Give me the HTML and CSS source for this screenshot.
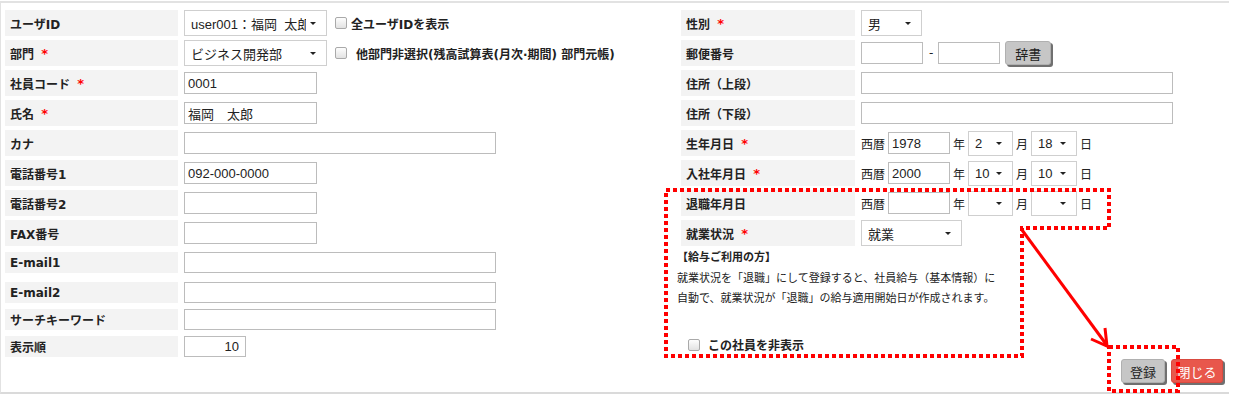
FILE: index.html
```html
<!DOCTYPE html>
<html lang="ja">
  <head>
    <meta charset="UTF-8" />
    <title>社員登録</title>
    <link rel="stylesheet" href="styles.css">
  </head>
  <body>
    <div class="panel">
      <div class="cols">
        <!-- left column -->
        <div class="col-l">
          <div class="rows">
            <div class="row">
              <div class="lbl">ユーザID</div>
              <div class="sel w143"><span>user001：福岡&nbsp;&nbsp;太郎</span><i class="caret"></i></div>
              <label class="check"><span class="chk"></span>全ユーザIDを表示</label>
            </div>
            <div class="row">
              <div class="lbl">部門 <b class="req">*</b></div>
              <div class="sel w143"><span>ビジネス開発部</span><i class="caret"></i></div>
              <label class="check"><span class="chk"></span><span class="pad">他部門非選択(残高試算表(月次·期間) 部門元帳)</span></label>
            </div>
            <div class="row">
              <div class="lbl">社員コード <b class="req">*</b></div>
              <input class="txt w133" type="text" value="0001">
            </div>
            <div class="row">
              <div class="lbl">氏名 <b class="req">*</b></div>
              <input class="txt w133" type="text" value="福岡　太郎">
            </div>
            <div class="row">
              <div class="lbl">カナ</div>
              <input class="txt w312" type="text" value="">
            </div>
            <div class="row">
              <div class="lbl">電話番号1</div>
              <input class="txt w133" type="text" value="092-000-0000">
            </div>
            <div class="row">
              <div class="lbl">電話番号2</div>
              <input class="txt w133" type="text" value="">
            </div>
            <div class="row">
              <div class="lbl">FAX番号</div>
              <input class="txt w133" type="text" value="">
            </div>
          </div>

          <div class="rows compact">
            <div class="row">
              <div class="lbl">E-mail1</div>
              <input class="txt w312" type="text" value="">
            </div>
            <div class="row more">
              <div class="lbl">E-mail2</div>
              <input class="txt w312" type="text" value="">
            </div>
            <div class="row">
              <div class="lbl">サーチキーワード</div>
              <input class="txt w312" type="text" value="">
            </div>
            <div class="row">
              <div class="lbl">表示順</div>
              <input class="txt w62 num" type="text" value="10">
            </div>
          </div>
        </div>

        <!-- right column -->
        <div class="col-r">
          <div class="rows">
            <div class="row">
              <div class="lbl">性別 <b class="req">*</b></div>
              <div class="sel w61"><span>男</span><i class="caret"></i></div>
            </div>
            <div class="row">
              <div class="lbl">郵便番号</div>
              <div class="zip">
                <input class="txt w62" type="text" value="">
                <span class="dash">-</span>
                <input class="txt w62" type="text" value="">
                <button class="btn dict">辞書</button>
              </div>
            </div>
            <div class="row">
              <div class="lbl">住所（上段）</div>
              <input class="txt w312" type="text" value="">
            </div>
            <div class="row">
              <div class="lbl">住所（下段）</div>
              <input class="txt w312" type="text" value="">
            </div>
            <div class="row">
              <div class="lbl">生年月日 <b class="req">*</b></div>
              <div class="date">
                <span class="unit">西暦</span>
                <input class="txt w62" type="text" value="1978">
                <span class="unit">年</span>
                <div class="sel w45"><span>2</span><i class="caret"></i></div>
                <span class="unit">月</span>
                <div class="sel w46"><span>18</span><i class="caret"></i></div>
                <span class="unit">日</span>
              </div>
            </div>
            <div class="row">
              <div class="lbl">入社年月日 <b class="req">*</b></div>
              <div class="date">
                <span class="unit">西暦</span>
                <input class="txt w62" type="text" value="2000">
                <span class="unit">年</span>
                <div class="sel w45"><span>10</span><i class="caret"></i></div>
                <span class="unit">月</span>
                <div class="sel w46"><span>10</span><i class="caret"></i></div>
                <span class="unit">日</span>
              </div>
            </div>
            <div class="row">
              <div class="lbl">退職年月日</div>
              <div class="date">
                <span class="unit">西暦</span>
                <input class="txt w62" type="text" value="">
                <span class="unit">年</span>
                <div class="sel w45"><span></span><i class="caret"></i></div>
                <span class="unit">月</span>
                <div class="sel w46"><span></span><i class="caret"></i></div>
                <span class="unit">日</span>
              </div>
            </div>
            <div class="row">
              <div class="lbl">就業状況 <b class="req">*</b></div>
              <div class="sel w101"><span>就業</span><i class="caret"></i></div>
            </div>
          </div>

          <div class="note">
            <b>【給与ご利用の方】</b><br>
            就業状況を「退職」にして登録すると、社員給与（基本情報）に<br>
            自動で、就業状況が「退職」の給与適用開始日が作成されます。
          </div>

          <label class="check hide-row"><span class="chk"></span>この社員を非表示</label>
        </div>
      </div>

      <div class="footer">
        <button class="btn save">登録</button>
        <button class="btn red">閉じる</button>
      </div>
    </div>

    <!-- annotation overlay -->
    <svg class="marks" width="1247" height="399" viewBox="0 0 1247 399">
      <g fill="none" stroke="#f00">
        <path d="M666 190H1109V228H1022V356H666Z" stroke-width="4" stroke-dasharray="4 3" />
        <rect x="1109" y="347" width="69" height="44" stroke-width="4" stroke-dasharray="4 3" />
        <path d="M1022 230L1106 344" stroke-width="3" />
        <path d="M1091 339L1107 346L1105 328" stroke-width="3" />
      </g>
    </svg>
  </body>
</html>
```

FILE: styles.css
```css
* {
  box-sizing: border-box;
}

body {
  margin: 0;
  font-family: "DejaVu Sans", "Noto Sans CJK JP", sans-serif;
  font-size: 12px;
  color: #222;
  background: #fff;
}

.panel {
  width: 1229px;
  height: 393px;
  margin-top: 1px;
  border-top: 2px solid #e2e2e2;
  border-left: 1px solid #e2e2e2;
  border-bottom: 2px solid #dadada;
  padding: 7px 4px 0 4px;
}

.cols {
  display: flex;
}

.col-l {
  width: 671px;
}

.col-r {
  flex: 1;
}

.rows {
  display: flex;
  flex-direction: column;
  gap: 4px;
}

.row {
  display: flex;
  align-items: center;
  gap: 6px;
  height: 26px;
}

.compact {
  gap: 6px;
  margin-top: 6px;
}

.compact .row {
  height: 21px;
  align-items: stretch;
}

.compact .row.more {
  margin-top: 3px;
}

.lbl {
  width: 173px;
  align-self: stretch;
  display: flex;
  align-items: center;
  padding-left: 5px;
  background: #f3f3f3;
  font-weight: bold;
  color: #222;
  white-space: pre;
}

.col-r .rows {
  margin-left: 5px;
}

.col-r .lbl {
  width: 174px;
}

.req {
  color: #f00;
  font-size: 13px;
  margin-left: 3px;
}

/* inputs */
.txt {
  height: 22px;
  border: 1px solid #bcbcbc;
  padding: 0 3px;
  font-family: "Liberation Sans", "Noto Sans CJK JP", sans-serif;
  font-size: 13px;
  color: #222;
  background: #fff;
  outline: none;
}

.compact .txt {
  height: 21px;
}

.num {
  text-align: right;
  padding-right: 6px;
}

.w62 { width: 62px; }
.w133 { width: 133px; }
.w312 { width: 312px; }

/* select look-alike */
.sel {
  position: relative;
  height: 26px;
  border: 1px solid #cfcfcf;
  background: #fff;
  display: flex;
  align-items: center;
  padding-left: 6px;
  font-family: "Liberation Sans", "Noto Sans CJK JP", sans-serif;
  font-size: 13px;
  overflow: hidden;
  white-space: nowrap;
}

.sel span {
  flex: 1;
  overflow: hidden;
}

.caret {
  flex: none;
  width: 0;
  height: 0;
  margin: 0 10px 0 4px;
  border-left: 3px solid transparent;
  border-right: 3px solid transparent;
  border-top: 3px solid #222;
}

.w143 { width: 143px; }
.w61 { width: 61px; }
.w45 { width: 45px; height: 25px; }
.w46 { width: 46px; height: 25px; }
.w101 { width: 101px; }

/* checkbox */
.check {
  display: flex;
  align-items: center;
  gap: 4px;
  font-weight: bold;
  margin-left: 2px;
}

.chk {
  width: 12px;
  height: 12px;
  border: 1px solid #a9a9a9;
  border-radius: 2px;
  background: linear-gradient(#fdfdfd, #e2e2e2);
}

.check .pad {
  margin-left: 5px;
}

.zip {
  display: flex;
  align-items: center;
}

.dash {
  margin: 0 5px 0 6px;
}

.date {
  display: flex;
  align-items: center;
  gap: 3px;
}

.date .unit {
  font-size: 12px;
}

/* buttons */
.btn {
  height: 24px;
  padding: 0;
  border: 1px solid #b0b0b0;
  border-radius: 3px;
  background: #c6c6c6;
  box-shadow: 2px 2px 0 #707070;
  font-family: "Noto Sans CJK JP", sans-serif;
  font-size: 13px;
  color: #222;
  text-align: center;
  white-space: nowrap;
  cursor: pointer;
}

.btn.dict {
  width: 46px;
  margin-left: 5px;
}

.btn.save {
  width: 44px;
}

.btn.red {
  width: 52px;
  background: #e8574c;
  border-color: #d94a40;
  color: #fff;
}

/* note */
.note {
  margin-left: 1px;
  font-family: "Noto Sans CJK JP", sans-serif;
  font-size: 11px;
  line-height: 20.5px;
  color: #222;
}

.hide-row {
  margin: 27px 0 0 12px;
  height: 20px;
  gap: 8px;
}

.footer {
  display: flex;
  justify-content: flex-end;
  gap: 6px;
  margin-top: 2px;
  padding-right: 2px;
}

.marks {
  position: absolute;
  top: 0;
  left: 0;
  pointer-events: none;
}
```
